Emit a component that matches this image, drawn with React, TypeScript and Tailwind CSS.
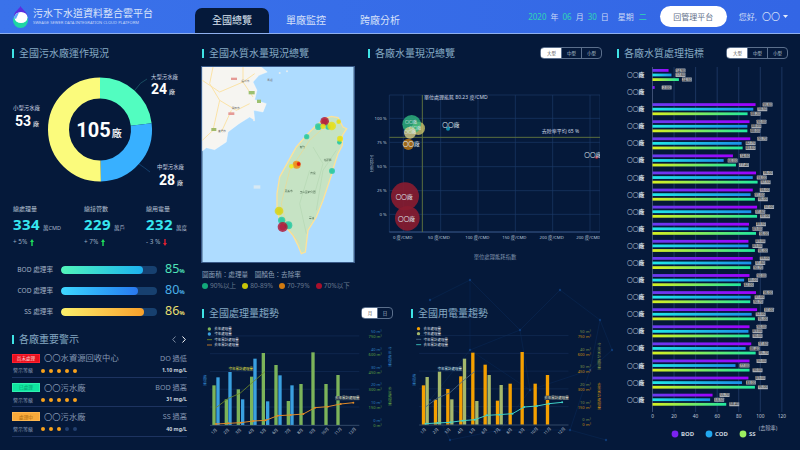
import React from "react";

const CJK = "'Noto Sans','Noto Sans CJK TC',sans-serif";

function Title({ children }: { children: React.ReactNode }) {
  return (
    <div className="flex items-center gap-[5px] h-[14px]">
      <span className="w-[2px] h-[9px] bg-[#3fe3e6]" />
      <span className="text-[10px] leading-[14px] text-[#86aac4] whitespace-nowrap">{children}</span>
    </div>
  );
}

function Toggle({ items, narrow }: { items: string[]; narrow?: boolean }) {
  return (
    <div className="flex h-[12px] rounded-[4px] border border-[#5b6f8c] overflow-hidden">
      {items.map((t, i) => (
        <span
          key={t}
          className={
            (narrow ? "w-[15px] " : "w-[20px] ") +
            "flex items-center justify-center text-[4.5px] leading-none border-l " +
            (i === 0 ? "bg-white text-[#555] border-white" : "text-[#b9c6d6] border-[#5b6f8c]")
          }
        >
          {t}
        </span>
      ))}
    </div>
  );
}

function Logo() {
  return (
    <svg width="17" height="24" viewBox="0 0 17 24" className="shrink-0">
      <path d="M8.5 1 C10 4 15 7 15.5 11 L2 11 C2 7 7 4 8.5 1Z" fill="#5a2fe0" />
      <circle cx="8.5" cy="15.5" r="7.5" fill="#1fd6a4" />
      <ellipse cx="9" cy="12.5" rx="6.5" ry="5.5" fill="#ffffff" />
      <path d="M2 13 C3 9 5 8 7 7.5 L4 14Z" fill="#5fa8ff" />
    </svg>
  );
}

function Header() {
  return (
    <header className="relative z-10 h-[34px] shrink-0 flex items-end bg-gradient-to-r from-[#3a72ea] to-[#3366e5] border-b border-[#8fb0ee]">
      <div className="w-[195px] h-[33px] pl-[12px] flex items-center gap-[4px]">
        <Logo />
        <div className="flex flex-col">
          <span className="text-[10px] leading-[13px] text-[#dbe5fa] whitespace-nowrap">污水下水道資料整合雲平台</span>
          <span className="text-[4.1px] leading-[6px] text-[#c4d5f7] whitespace-nowrap">SWEAGE SEWER DATA INTEGRATION CLOUD PLATFORM</span>
        </div>
      </div>
      <div className="flex h-[25px] text-[10px] text-[#d6e1f9]">
        <span className="w-[74px] flex items-center justify-center bg-[#05193a] rounded-t-[7px] text-[#dde6f2]">全國總覽</span>
        <span className="w-[74px] flex items-center justify-center">單廠監控</span>
        <span className="w-[74px] flex items-center justify-center">跨廠分析</span>
      </div>
      <div className="ml-auto h-[33px] pr-[12px] flex items-center text-[8px] text-[#cbd9f6]">
        <span className="flex items-center gap-[4px] mr-[13px] whitespace-nowrap">
          <span className="text-[#2fd6b4]">2020</span>年<span className="text-[#2fd6b4]">06</span>月
          <span className="text-[#2fd6b4]">30</span>日<span className="ml-[5px]">星期</span>
          <span className="text-[#2fd6b4] ml-[1px]">二</span>
        </span>
        <span className="w-[67px] h-[21px] mr-[12px] rounded-full bg-white flex items-center justify-center text-[#62708a]">回管理平台</span>
        <span className="flex items-center gap-[3px] whitespace-nowrap text-[#cfdcf7]">
          您好, <span className="text-[9px] ml-[2px]">〇〇</span>
          <svg width="5" height="3" viewBox="0 0 5 3"><path d="M0 0H5L2.5 3Z" fill="#e4ecfb" /></svg>
        </span>
      </div>
    </header>
  );
}

function arc(cx: number, cy: number, r: number, a0: number, a1: number) {
  const p = (a: number) => [cx + r * Math.sin((a * Math.PI) / 180), cy - r * Math.cos((a * Math.PI) / 180)];
  const [x0, y0] = p(a0);
  const [x1, y1] = p(a1);
  return `M${x0} ${y0}A${r} ${r} 0 ${a1 - a0 > 180 ? 1 : 0} 1 ${x1} ${y1}`;
}

function Donut() {
  return (
    <svg width="176" height="130" viewBox="12 65 176 130" className="block">
      <path d={arc(100, 129.5, 41.5, 0, 83)} fill="none" stroke="#52fdc0" strokeWidth="21" />
      <path d={arc(100, 129.5, 41.5, 83, 179)} fill="none" stroke="#38b0ff" strokeWidth="21" />
      <path d={arc(100, 129.5, 41.5, 179, 360)} fill="none" stroke="#fbfb7c" strokeWidth="21" />
      <path d="M135 90 Q140 82 147 79" fill="none" stroke="#1f5f6f" strokeWidth="0.7" />
      <path d="M139 164 Q145 168 150 172" fill="none" stroke="#1a4f80" strokeWidth="0.7" />
      <text x="99" y="136.5" textAnchor="middle" fill="#fff" fontSize="20" fontWeight="700" fontFamily="Roboto,'Noto Sans CJK TC',sans-serif">
        105<tspan fontSize="10" fontWeight="500" dx="1">廠</tspan>
      </text>
      <g fill="#cfd8e4" fontSize="5.4">
        <text x="151" y="79">大型污水廠</text>
        <text x="157" y="169">中型污水廠</text>
        <text x="13" y="109.5">小型污水廠</text>
      </g>
      <g fill="#fff" fontWeight="700" fontFamily="Roboto,'Noto Sans CJK TC',sans-serif">
        <text x="151" y="94" fontSize="14">24<tspan fontSize="6" fontWeight="400" dx="2">廠</tspan></text>
        <text x="159" y="185" fontSize="14">28<tspan fontSize="6" fontWeight="400" dx="2">廠</tspan></text>
        <text x="15" y="126" fontSize="14">53<tspan fontSize="6" fontWeight="400" dx="2">廠</tspan></text>
      </g>
    </svg>
  );
}

function Stat({ label, value, unit, change, up, w }: { label: string; value: string; unit: string; change: string; up: boolean; w: string }) {
  return (
    <div className={w + " flex flex-col pl-px whitespace-nowrap"}>
      <span className="text-[6px] leading-[8px] text-[#b8c4d4]">{label}</span>
      <span className="mt-[4px] flex items-baseline gap-[3px] leading-[15px]">
        <span className="text-[15px] font-bold tracking-[0.4px] text-[#37e6f0]">{value}</span>
        <span className="text-[5.5px] text-[#aab8ca]">{unit}</span>
      </span>
      <span className="mt-[2px] flex items-center gap-[3px] leading-[8px] text-[6.4px] text-[#9aabc0]">
        {change}
        <svg width="4" height="7" viewBox="0 0 4 7">
          <path d={up ? "M2 0L4 3H2.7V7H1.3V3H0Z" : "M2 7L4 4H2.7V0H1.3V4H0Z"} fill={up ? "#1fe05a" : "#e02030"} />
        </svg>
      </span>
    </div>
  );
}

function RateBar({ label, pct, fill, fillW, color }: { label: string; pct: string; fill: string; fillW: string; color: string }) {
  return (
    <div className="flex items-center h-[20.7px]">
      <span className="w-[41px] text-right text-[6.6px] text-[#a3b2c5] whitespace-nowrap">{label}</span>
      <div className="ml-[8px] w-[96px] h-[8px] rounded-full bg-[#17406f] overflow-hidden">
        <div className={fillW + " h-full rounded-full " + fill} />
      </div>
      <span className={"ml-[8px] text-[12.5px] leading-[14px] whitespace-nowrap " + color}>
        {pct}
        <span className="text-[6px] font-bold">%</span>
      </span>
    </div>
  );
}

function Alert({ badge, badgeCls, name, issue, value, on }: { badge: string; badgeCls: string; name: string; issue: string; value: string; on: number }) {
  return (
    <div className="h-[29.2px] pt-[3px] border-b border-[#1d3360] flex flex-col">
      <div className="flex items-center h-[13px]">
        <span className={"w-[28px] h-[9px] flex items-center justify-center text-[4.6px] leading-none border " + badgeCls}>{badge}</span>
        <span className="ml-[4px] text-[8.3px] leading-none text-[#8698b2] whitespace-nowrap">{name}</span>
        <span className="ml-auto text-[7.2px] leading-none text-[#8698b2] whitespace-nowrap">{issue}</span>
      </div>
      <div className="flex items-center h-[10px] mt-px">
        <span className="w-[29px] text-[5px] text-[#8698b2] pl-px">警示等級</span>
        <span className="flex gap-[4px]">
          {[0, 1, 2, 3, 4].map((i) => (
            <span key={i} className={"w-[4px] h-[4px] rounded-full " + (i < on ? "bg-[#f8a21c]" : "bg-[#23406f]")} />
          ))}
        </span>
        <span className="ml-auto text-[5.2px] font-bold text-[#c8d2de]">{value}</span>
      </div>
    </div>
  );
}

function LeftColumn() {
  return (
    <section className="w-[190px] ml-[12px] pt-[12px] shrink-0 flex flex-col">
      <Title>全國污水廠運作現況</Title>
      <div className="mt-[5px]">
        <Donut />
      </div>
      <div className="mt-[10px] flex">
        <Stat w="w-[71px]" label="總處理量" value="334" unit="萬CMD" change="+ 5%" up />
        <Stat w="w-[62px]" label="總接管數" value="229" unit="萬戶" change="+ 7%" up />
        <Stat w="w-[40px]" label="總用電量" value="232" unit="萬度" change="- 3 %" up={false} />
      </div>
      <div className="mt-[14px] w-[175px]">
        <RateBar label="BOD 處理率" pct="85" fillW="w-[85%]" fill="bg-gradient-to-r from-[#52f5b8] to-[#1fb2f0]" color="text-[#4fe3b8]" />
        <RateBar label="COD 處理率" pct="80" fillW="w-[80%]" fill="bg-gradient-to-r from-[#3fd8ff] to-[#2a78f0]" color="text-[#4ab0e8]" />
        <RateBar label="SS 處理率" pct="86" fillW="w-[86%]" fill="bg-gradient-to-r from-[#fbf06a] to-[#f8a02a]" color="text-[#e6df70]" />
      </div>
      <div className="mt-[10px] w-[175px] flex items-center justify-between">
        <Title>各廠重要警示</Title>
        <span className="flex gap-[6px] pr-[1px]">
          <svg width="4" height="7" viewBox="0 0 4 7"><path d="M3.5 .5L.7 3.5l2.8 3" fill="none" stroke="#7b8aa0" strokeWidth="1" /></svg>
          <svg width="4" height="7" viewBox="0 0 4 7"><path d="M.5 .5l2.8 3-2.8 3" fill="none" stroke="#ffffff" strokeWidth="1" /></svg>
        </span>
      </div>
      <div className="mt-[3px] w-[175px]">
        <Alert badge="尚未處理" badgeCls="bg-[#e8101e] border-[#ff2030] text-[#ffd0d0]" name="〇〇水資源回收中心" issue="DO 過低" value="1.10 mg/L" on={5} />
        <Alert badge="已處理" badgeCls="bg-[#0fe6a0] border-[#30f0b0] text-[#0a9a70]" name="〇〇污水廠" issue="BOD 過高" value="31 mg/L" on={5} />
        <Alert badge="處理中" badgeCls="bg-[#f8a93a] border-[#ffb850] text-[#a86a10]" name="〇〇污水廠" issue="SS 過高" value="40 mg/L" on={3} />
      </div>
    </section>
  );
}

function MapView() {
  const bubbles: [number, number, number, string][] = [
    [375, 183, 13, "#b01030"], [356, 199, 10, "#1fc8a0"], [385, 200, 8, "#1fc8a0"], [370, 198, 8, "#e8e010"],
    [396, 197, 13, "#e8e010"], [417, 184, 7, "#e8e010"], [321, 229, 8, "#1fc8a0"], [419, 246, 7, "#1fc8a0"],
    [421, 235, 9, "#e8e010"], [397, 332, 9, "#1fc8a0"], [291, 313, 12, "#f08a10"], [297, 311, 6, "#e01010"],
    [275, 318, 7, "#f0ee20"], [238, 452, 13, "#d8d410"], [246, 480, 11, "#1fc8a0"], [266, 495, 12, "#1fc8a0"],
    [249, 500, 15, "#b01030"],
  ];
  const island = "M395 168L415 172L430 200L441 205L428 225L428 255L415 280L402 320L395 345L385 375L370 420L350 470L325 510L317 575L305 580L295 555L280 525L262 505L240 480L232 450L232 400L240 350L262 310L290 260L320 225L350 195L375 175Z";
  return (
    <svg width="152" height="195" viewBox="8 20 454 585" className="block blur-[0.35px] outline outline-1 outline-[#3a5a88]">
      <rect x="8" y="20" width="454" height="585" fill="#aedcff" />
      <path d="M8 20H185L203 35L178 45L160 65L172 90L165 118L200 130L190 155L162 150L165 180L150 170L118 190L85 215L80 245L45 268L20 262L8 272Z" fill="#f6f5f1" stroke="#fff" strokeWidth="1" />
      <g fill="none" stroke="#fbdf98" strokeWidth="2.5">
        <path d="M40 20L30 70L60 120L40 210L8 240" />
        <path d="M8 60L60 95L130 65L165 40" />
        <path d="M60 120L110 150L150 130M95 150L65 215" />
        <path d="M130 20L130 65L160 110" />
      </g>
      <rect x="94" y="52" width="18" height="7" fill="#e59a96" />
      <rect x="147" y="92" width="18" height="10" fill="#9cc070" />
      <rect x="86" y="156" width="18" height="8" fill="#e59a96" />
      <rect x="35" y="203" width="15" height="9" fill="#a2bb6a" />
      <rect x="172" y="118" width="12" height="10" fill="#9cc070" />
      <g fontSize="8" fill="#777">
        <text x="125" y="66">福州市</text><text x="96" y="146">莆田市</text><text x="55" y="215">廈門市</text>
        <text x="203" y="62">馬祖</text>
      </g>
      <g fill="#e8eef0"><circle cx="240" cy="38" r="3" /><circle cx="262" cy="33" r="3" /><circle cx="163" cy="180" r="3" /><rect x="162" y="375" width="20" height="10" opacity=".7" /></g>
      <path d={island} fill="#c6e3c4" stroke="#fde29a" strokeWidth="4" />
      <g fill="none" stroke="#afd3ad" strokeWidth="1.5">
        <path d="M340 260L370 310L345 400M410 270L370 330L350 450M330 330L300 430L320 520" />
      </g>
      <g fill="none" stroke="#fcd67e" strokeWidth="1.6">
        <path d="M385 190L330 240L270 330L245 430L262 500M262 500L300 550" />
      </g>
      <g fontSize="8" fill="#4d6a50">
        <text x="300" y="262">新竹</text><text x="372" y="302">花蓮縣</text><text x="332" y="342">南投</text>
        <text x="255" y="394">嘉義市</text><text x="300" y="398">玉山國家公園</text><text x="328" y="476">臺東</text>
      </g>
      {bubbles.map(([x, y, r, c], i) => (
        <g key={i}>
          <circle cx={x} cy={y} r={r} fill={c} opacity={0.78} />
          <circle cx={x} cy={y} r={r * 0.65} fill={c} opacity={0.5} />
        </g>
      ))}
    </svg>
  );
}

function Scatter() {
  const f = "#b9c6d8";
  return (
    <svg width="230" height="180" viewBox="0 0 690 540" className="block">
      <g stroke="#1b3968" strokeWidth="2" fill="none">
        {[30, 100, 172, 245, 317, 388].map((y) => <path key={y} d={`M58 ${y}H690`} />)}
        {[58, 100, 212, 324, 436, 548, 660, 690].map((x) => <path key={x} d={`M${x} 30V441`} />)}
      </g>
      <path d="M58 441H690" stroke="#3d5d8f" strokeWidth="3" />
      <path d="M157 30V441M58 157H692" stroke="#5c6f3f" strokeWidth="3" />
      <circle cx="145" cy="130" r="20" fill="#c9c36a" opacity=".8" />
      <circle cx="125" cy="118" r="28" fill="#2fb87f" opacity=".8" />
      <circle cx="120" cy="143" r="18" fill="#d8d08a" opacity=".8" />
      <circle cx="115" cy="178" r="17" fill="#b87514" opacity=".85" />
      <circle cx="105" cy="334" r="42" fill="#8a1c30" opacity=".9" />
      <circle cx="112" cy="400" r="37" fill="#8a1c30" opacity=".9" />
      <circle cx="234" cy="131" r="6" fill="#0f8ba8" />
      <circle cx="680" cy="217" r="5" fill="#9a1c30" />
      <g fontSize="13" fill={f}>
        {[["100 %", 104], ["75 %", 177], ["50 %", 249], ["25 %", 321], ["0 %", 393]].map(([t, y]) => (
          <text key={t} x="50" y={y} textAnchor="end">{t}</text>
        ))}
        {[["0 度/CMD", 98], ["50 度/CMD", 207], ["100 度/CMD", 322], ["150 度/CMD", 433], ["200 度/CMD", 545], ["200 度/CMD", 655]].map(([t, x], i) => (
          <text key={i} x={x} y="463" textAnchor="middle">{t}</text>
        ))}
      </g>
      <g fontSize="15" fill="#cfd9e6">
        <text x="162" y="42">單位處理能耗 80.23 度/CMD</text>
        <text x="515" y="144">去除率平均 65 %</text>
      </g>
      <text x="375" y="522" fontSize="16" fill="#7f93ad" textAnchor="middle">單位處理能耗指數</text>
      <text x="5" y="235" fontSize="14" fill="#8aa0bc" textAnchor="middle" writingMode="vertical-rl">(去除率)</text>
      <g fontSize="17" fill="#dde3ea" fontWeight="400">
        <text x="217" y="127">〇〇廠</text>
        <text x="98" y="184">〇〇廠</text>
        <text x="643" y="215">〇〇廠</text>
        <text x="77" y="341">〇〇廠</text>
        <text x="84" y="408">〇〇廠</text>
        <text x="105" y="118" fontSize="12">〇〇廠</text>
        <text x="118" y="134" fontSize="12">〇〇廠</text>
        <text x="102" y="148" fontSize="12">〇〇廠</text>
      </g>
    </svg>
  );
}

type Pt = [number, number];
type TrendProps = {
  viewBox: string;
  w: number;
  base: number;
  dx: number;
  topY: number;
  barA: Pt[];
  barB: Pt[];
  lineA: Pt[];
  lineB: Pt[];
  colorA: string;
  colorB: string;
  colorLineA: string;
  colorLineB: string;
  rotTop: string;
  rotBottom: string;
  rotTopName: string;
  rotBottomName: string;
  labelTop: Pt;
  labelBottom: Pt;
  labelTopColor: string;
};

function Trend(p: TrendProps) {
  const months = ["1月", "2月", "3月", "4月", "5月", "6月", "7月", "8月", "9月", "10月", "11月", "12月"];
  const mx = [45, 82, 118, 156, 192, 228, 266, 303, 340, 378, 417, 460];
  const legend = [
    { c: p.colorA, t: "去年處理量", kind: "dot" },
    { c: p.colorB, t: "今年處理量", kind: "dot" },
    { c: p.colorLineA, t: "今年累計處理量", kind: "line" },
    { c: p.colorLineB, t: "去年累計處理量", kind: "line" },
  ];
  const ly = [p.topY - 21, p.topY - 6, p.topY + 11, p.topY + 27];
  const ticks = ["50 m³", "40 m³", "30 m³", "20 m³", "10 m³", "0 m³"];
  const ticks2 = ["750 m³", "600 m³", "450 m³", "300 m³", "150 m³", "0 m³"];
  return (
    <svg width={p.w} height="127" viewBox={p.viewBox} className="block">
      <g stroke="#142d57" strokeWidth="2">
        {[0, 1, 2, 3, 4].map((i) => <path key={i} d={`M${30 + p.dx} ${p.base - 54 - i * 53.3}H${478 + p.dx}`} />)}
      </g>
      {p.barA.map(([x, y]) => <rect key={x} x={x - 5} y={y} width="10" height={p.base - y} fill={p.colorA} />)}
      {p.barB.map(([x, y]) => <rect key={x} x={x - 5} y={y} width="10" height={p.base - y} fill={p.colorB} />)}
      <path d={`M${30 + p.dx} ${p.base + 1}H${478 + p.dx}`} stroke="#4a6080" strokeWidth="2" />
      <polyline points={p.lineA.map((q) => q.join(",")).join(" ")} fill="none" stroke={p.colorLineA} strokeWidth="2.5" />
      <polyline points={p.lineB.map((q) => q.join(",")).join(" ")} fill="none" stroke={p.colorLineB} strokeWidth="3" />
      {p.lineB.map(([x, y]) => <circle key={x} cx={x} cy={y} r="3" fill={p.colorLineB} />)}
      <g fontSize="12" fill="#c4cedb">
        {months.map((m, i) => (
          <text key={m} transform={`translate(${mx[i] + p.dx} ${p.base + 22}) rotate(-45)`} textAnchor="middle">{m}</text>
        ))}
      </g>
      {legend.map((l, i) => (
        <g key={l.t}>
          {l.kind === "dot" ? (
            <circle cx={28 + p.dx} cy={ly[i]} r="5" fill={l.c} />
          ) : (
            <path d={`M${21 + p.dx} ${ly[i]}H${36 + p.dx}`} stroke={l.c} strokeWidth="2.5" />
          )}
          <text x={43 + p.dx} y={ly[i] + 4} fontSize="10.5" fill="#e0e6ee">{l.t}</text>
        </g>
      ))}
      {ticks.map((t, i) => (
        <g key={i} fontSize="12" textAnchor="end">
          <text x={545 + p.dx} y={p.base - 279 + i * 53 + 4} fill={p.rotTop}>{t}</text>
          <text x={545 + p.dx} y={p.base - 264 + i * 53 + 4} fill={p.rotBottom}>{ticks2[i]}</text>
        </g>
      ))}
      <text x={570 + p.dx} y={p.base - 205} writingMode="vertical-rl" fontSize="11.5" textAnchor="middle" fill={p.rotTop}>{p.rotTopName}</text>
      <text x={570 + p.dx} y={p.base - 87} writingMode="vertical-rl" fontSize="11.5" textAnchor="middle" fill={p.rotBottom}>{p.rotBottomName}</text>
      <text x={15 + p.dx} y={p.base - 135} writingMode="vertical-rl" fontSize="11.5" textAnchor="middle" fill="#2f7fc0">處理量</text>
      <g fontSize="10.5">
        <rect x={p.labelTop[0] - 36} y={p.labelTop[1] - 7} width="72" height="13" fill="#0c2348" />
        <text x={p.labelTop[0]} y={p.labelTop[1] + 3} textAnchor="middle" fill={p.labelTopColor}>今年累計處理量</text>
        <rect x={p.labelBottom[0] - 36} y={p.labelBottom[1] - 7} width="72" height="13" fill="#283a52" />
        <text x={p.labelBottom[0]} y={p.labelBottom[1] + 3} textAnchor="middle" fill="#e4e0c8">去年累計處理量</text>
      </g>
    </svg>
  );
}

function Center() {
  return (
    <div className="w-[398px] shrink-0 flex flex-col pt-[12px]">
      <div className="flex h-[260px]">
        <section className="w-[166px] shrink-0">
          <Title>全國水質水量現況總覽</Title>
          <div className="mt-[7px] w-[152px]">
            <MapView />
          </div>
          <p className="mt-[8px] text-[6.6px] leading-[10px] text-[#8ea0b8] whitespace-nowrap">圖面積：處理量　圖顏色：去除率</p>
          <div className="mt-[1px] flex items-center text-[6.6px] leading-[10px] text-[#66788f] whitespace-nowrap">
            {[["bg-[#12a87a]", "90%以上"], ["bg-[#c8c408]", "80-89%"], ["bg-[#d07a10]", "70-79%"], ["bg-[#a8102c]", "70%以下"]].map(([c, t]) => (
              <span key={t} className="flex items-center gap-[2px] mr-[6px]">
                <span className={"w-[6px] h-[6px] rounded-full " + c} />
                {t}
              </span>
            ))}
          </div>
        </section>
        <section className="w-[234px] shrink-0">
          <div className="flex items-center justify-between">
            <Title>各廠水量現況總覽</Title>
            <Toggle items={["大型", "中型", "小型"]} />
          </div>
          <div className="mt-[25px] ml-[2px]">
            <Scatter />
          </div>
        </section>
      </div>
      <div className="flex">
        <section className="w-[209px] shrink-0">
          <div className="flex items-center w-[191px] justify-between">
            <Title>全國處理量趨勢</Title>
            <Toggle narrow items={["月", "日"]} />
          </div>
          <div className="mt-[2px] -ml-[2px]">
            <Trend
              viewBox="0 186 630 381" w={210} base={495} dx={0} topY={228}
              barA={[[42, 376], [79, 418], [115, 388], [155, 350], [190, 279], [228, 315], [265, 423], [303, 372], [339, 277], [378, 372], [414, 345]]}
              barB={[[54, 352], [90, 336], [128, 418], [165, 296], [203, 424], [240, 346], [276, 376]]}
              lineA={[[48, 443], [85, 415], [120, 400], [160, 365], [195, 335]]}
              lineB={[[48, 492], [85, 490], [122, 488], [160, 483], [197, 481], [233, 467], [272, 465], [310, 462], [345, 443], [383, 440], [422, 432], [460, 428]]}
              colorA="#7cb45a" colorB="#3aa0e0" colorLineA="#6f8a28" colorLineB="#e08a28"
              rotTop="#2f7fc0" rotBottom="#5fa040" rotTopName="今年處理量" rotBottomName="去年處理量"
              labelTop={[122, 328]} labelBottom={[442, 415]} labelTopColor="#e8e030"
            />
          </div>
        </section>
        <section className="flex-1">
          <Title>全國用電量趨勢</Title>
          <div className="mt-[3px] -ml-[11px]">
            <Trend
              viewBox="0 70 620 381" w={207} base={375} dx={27} topY={108}
              barA={[[70, 257], [106, 300], [143, 268], [182, 230], [218, 159], [255, 195], [292, 303], [330, 252], [366, 157], [405, 252], [442, 226]]}
              barB={[[81, 232], [118, 216], [155, 299], [193, 177], [230, 304], [267, 226], [303, 256]]}
              lineA={[[76, 322], [112, 295], [148, 280], [187, 245], [224, 215]]}
              lineB={[[76, 372], [112, 370], [150, 368], [187, 363], [224, 360], [260, 347], [297, 345], [337, 342], [372, 322], [410, 319], [447, 312], [486, 308]]}
              colorA="#f5a000" colorB="#a4b86c" colorLineA="#4a6a88" colorLineB="#3fd0c8"
              rotTop="#7c9048" rotBottom="#c88a10" rotTopName="今年累計處理量" rotBottomName="去年累計處理量"
              labelTop={[149, 208]} labelBottom={[469, 295]} labelTopColor="#d8eef0"
            />
          </div>
        </section>
      </div>
    </div>
  );
}

const rows: number[][] = [
  [14.9, 17.6, 24.5], [2, 0, 0], [95.6, 93.5, 88.2], [90, 88, 88], [90.7, 82.7, 83.6], [74.6, 66, 77.4], [96, 93, 97.5],
  [93, 91, 95], [97, 91.6, 97], [89.5, 89, 96], [89, 89, 95], [93, 91.6, 90.7], [90, 85, 82], [96, 91, 90.7], [97, 92, 95],
  [90, 89, 90], [91.6, 86.4, 95.7], [90, 77, 90], [89, 83, 95], [55.7, 53.5, 68.4],
];

function Bars() {
  const x0 = 652.5;
  const k = 1.078;
  const grads = ["bod", "cod", "ss"];
  return (
    <svg width="190" height="386" viewBox="610 64 190 386" className="block">
      <defs>
        <linearGradient id="bod"><stop offset="0" stopColor="#6a3cf0" /><stop offset="1" stopColor="#a000ff" /></linearGradient>
        <linearGradient id="cod"><stop offset="0" stopColor="#20e8e8" /><stop offset="1" stopColor="#1a8fe8" /></linearGradient>
        <linearGradient id="ss"><stop offset="0" stopColor="#d8f020" /><stop offset="1" stopColor="#20e8a0" /></linearGradient>
      </defs>
      {[0, 20, 40, 60, 80, 100, 120].map((v) => (
        <g key={v}>
          <path d={`M${x0 + v * k} 67V412`} stroke={v === 0 ? "#3d4f73" : "#1c3560"} strokeWidth="1" />
          <text x={x0 + v * k} y="418" textAnchor="middle" fontSize="4.8" fill="#c0cad8">{v}</text>
        </g>
      ))}
      {rows.map((r, i) => {
        const y = 75 + i * 17.09;
        return (
          <g key={i}>
            <text x="627" y={y + 2} fontSize="5.8" fill="#aab8c8">〇〇<tspan fill="#dde3ea" fontWeight="700">廠</tspan></text>
            {r.map((v, j) =>
              v > 0 ? (
                <g key={j}>
                  <rect x={x0} y={y - 6 + j * 4.6} width={v * k} height="2.8" fill={`url(#${grads[j]})`} />
                  <rect x={x0 + v * k + 3 + (j === 0 ? 4 : j === 1 ? 1 : 0)} y={y - 6.6 + j * 4.6} width="10" height="4" rx=".5" fill="#a8acb2" />
                  <text x={x0 + v * k + 8 + (j === 0 ? 4 : j === 1 ? 1 : 0)} y={y - 3.5 + j * 4.6} fontSize="3.6" textAnchor="middle" fill="#222">{v.toFixed(2)}</text>
                </g>
              ) : null
            )}
          </g>
        );
      })}
      <text x="768" y="430" fontSize="5.2" textAnchor="middle" fill="#b0bccb">(去除率)</text>
      {[[675, "#7a22f0", "BOD"], [709, "#22a8f0", "COD"], [743, "#9cf060", "SS"]].map(([x, c, t]) => (
        <g key={t as string}>
          <circle cx={x as number} cy="434" r="3.4" fill={c as string} />
          <text x={(x as number) + 6} y="436.3" fontSize="6" fontWeight="700" fill="#c8d2de">{t}</text>
        </g>
      ))}
    </svg>
  );
}

function RightColumn() {
  return (
    <section className="flex-1 pt-[12px] pl-[17px] flex flex-col">
      <div className="w-[171px] flex items-center justify-between">
        <Title>各廠水質處理指標</Title>
        <Toggle items={["大型", "中型", "小型"]} />
      </div>
      <div className="mt-[4px] -ml-[7px]">
        <Bars />
      </div>
    </section>
  );
}

function NetworkBackdrop() {
  const pts: Pt[] = [[430, 300], [470, 280], [520, 330], [560, 290], [600, 320], [470, 350], [530, 390], [590, 370], [430, 400], [500, 430], [570, 430], [612, 350], [606, 440], [450, 440]];
  const links = [[0, 1], [1, 2], [2, 3], [3, 4], [1, 5], [2, 5], [2, 6], [5, 6], [6, 7], [4, 7], [5, 8], [6, 9], [7, 10], [8, 9], [9, 10], [4, 11], [7, 11], [10, 12], [8, 13], [9, 13]];
  return (
    <svg className="absolute inset-0 pointer-events-none" width="800" height="450" viewBox="0 0 800 450">
      <g stroke="#0a2a58" strokeWidth="0.5" fill="none">
        {links.map(([a, b], i) => <path key={i} d={`M${pts[a][0]} ${pts[a][1]}L${pts[b][0]} ${pts[b][1]}`} />)}
      </g>
      {pts.map(([x, y], i) => <circle key={i} cx={x} cy={y} r="1.2" fill="#0f3a74" />)}
    </svg>
  );
}

export default function App() {
  return (
    <div className="relative w-[800px] h-[450px] overflow-hidden flex flex-col bg-[#05193a]" style={{ fontFamily: CJK }}>
      <NetworkBackdrop />
      <Header />
      <main className="relative flex flex-1 min-h-0">
        <LeftColumn />
        <Center />
        <RightColumn />
      </main>
    </div>
  );
}
